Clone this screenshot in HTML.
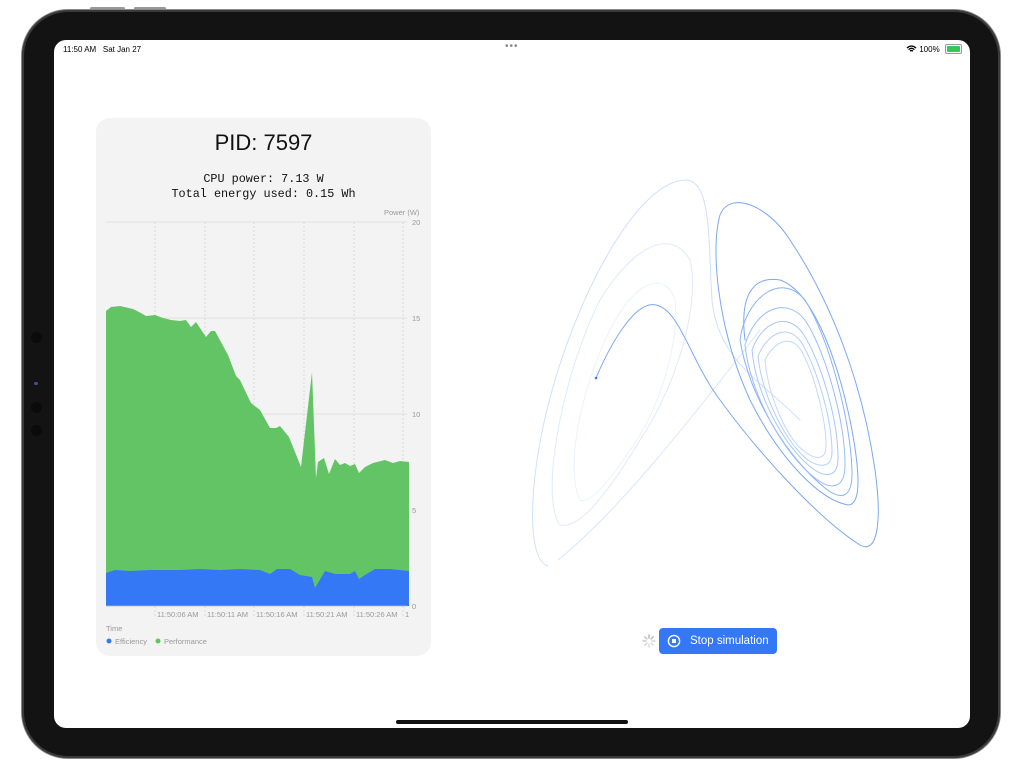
<!DOCTYPE html>
<html><head><style>
html,body{margin:0;padding:0;width:1024px;height:768px;background:#fff;overflow:hidden;font-family:"Liberation Sans",sans-serif}
.frame{position:absolute;left:22px;top:10px;width:978px;height:748px;border-radius:46px;background:#131313;box-shadow:0 0 0 1px #888, inset 0 0 0 2px #3a3a3a}
.screen{position:absolute;left:54px;top:40px;width:916px;height:688px;background:#fff;border-radius:12px;overflow:hidden}
.btnTop{position:absolute;top:7px;height:3px;background:#999;border-radius:2px}
.dot{position:absolute;left:31px;width:11px;height:11px;border-radius:50%;background:#0b0b0b}
.sb{position:absolute;top:5px;font-size:8px;color:#000}
.card{position:absolute;left:42px;top:78px;width:335px;height:538px;background:#f3f3f3;border-radius:14px}
.mono{font-family:"Liberation Mono",monospace}
</style></head><body>
<div class="btnTop" style="left:90px;width:35px"></div>
<div class="btnTop" style="left:134px;width:32px"></div>
<div class="frame"></div>
<div class="dot" style="top:332px"></div>
<div class="dot" style="top:402px"></div>
<div class="dot" style="top:425px"></div>
<div style="position:absolute;left:34px;top:382px;width:4px;height:3px;background:#3a4fa0;border-radius:2px"></div>
<div class="screen">
  <div class="sb" style="left:9px">11:50 AM&nbsp;&nbsp; Sat Jan 27</div>
  <div class="sb" style="left:451px;top:1px;color:#888;font-size:10px;letter-spacing:1px">•••</div>
  <div class="sb" style="left:852px">
    <svg width="11" height="8" viewBox="0 0 11 8" style="vertical-align:-1px"><path d="M1 3Q5.5-1 10 3M2.6 4.6Q5.5 2 8.4 4.6M4 6.1Q5.5 5 7 6.1" stroke="#000" stroke-width="1.3" fill="none"/></svg>
    100%</div>
  <div style="position:absolute;left:891px;top:4px;width:15px;height:8px;border:1px solid #999;border-radius:2px"><div style="margin:1px;height:6px;background:#34c759;border-radius:1px"></div></div>
  <div class="card">
    <div style="position:absolute;left:0;width:335px;top:12px;text-align:center;font-size:22px;color:#111">PID: 7597</div>
    <div class="mono" style="position:absolute;left:0;width:335px;top:54px;text-align:center;font-size:11.8px;line-height:15px;color:#111">CPU power: 7.13 W<br>Total energy used: 0.15 Wh</div>
  </div>
  <svg style="position:absolute;left:0;top:0" width="916" height="688" viewBox="54 40 916 688">
    <g stroke="#ddd" stroke-width="0.7">
      <line x1="106" y1="222" x2="407" y2="222"/><line x1="106" y1="318" x2="407" y2="318"/>
      <line x1="106" y1="414" x2="407" y2="414"/><line x1="106" y1="510" x2="407" y2="510"/>
    </g>
    <g stroke="#ccc" stroke-width="0.7" stroke-dasharray="2 2">
      <line x1="155" y1="222" x2="155" y2="618"/><line x1="205" y1="222" x2="205" y2="618"/>
      <line x1="254" y1="222" x2="254" y2="618"/><line x1="304" y1="222" x2="304" y2="618"/>
      <line x1="354" y1="222" x2="354" y2="618"/><line x1="403" y1="222" x2="403" y2="618"/>
    </g>
    <path fill="#63c466" d="M106 606L106 311 111 307 120 306 133 309 141 313 146 316 155 315 163 318 171 320 180 321 186 320 191 327 196 322 206 337 211 331 215 331 228 355 236 376 240 380 251 403 260 410 270 428 276 428 280 426 289 437 301 467 312 372 316 478 318 462 324 458 329 474 335 459 340 465 345 463 350 466 355 464 359 473 365 467 373 463 385 460 393 463 400 461 409 462 409 606Z"/>
    <path fill="#3478f6" d="M106 606L106 573 115 570 130 571 150 570 180 570 200 569 220 570 240 569 260 570 270 574 277 569 290 569 300 575 312 577 315 588 325 571 335 574 350 574 355 571 359 579 365 575 375 569 390 569 409 571 409 606Z"/>
    <line x1="106" y1="606" x2="407" y2="606" stroke="#bbb" stroke-width="0.7"/>
    <g font-size="7.5" fill="#999" font-family="Liberation Sans">
      <text x="384" y="215">Power (W)</text>
      <text x="412" y="225">20</text><text x="412" y="321">15</text><text x="412" y="417">10</text>
      <text x="412" y="513">5</text><text x="412" y="609">0</text>
      <text x="157" y="617">11:50:06 AM</text><text x="207" y="617">11:50:11 AM</text>
      <text x="256" y="617">11:50:16 AM</text><text x="306" y="617">11:50:21 AM</text>
      <text x="356" y="617">11:50:26 AM</text><text x="405" y="617">1</text>
      <text x="106" y="631">Time</text>
      <circle cx="109" cy="641" r="2.5" fill="#3478f6"/><text x="115" y="644">Efficiency</text>
      <circle cx="158" cy="641" r="2.5" fill="#63c466"/><text x="164" y="644">Performance</text>
    </g>
    <g fill="none" stroke-linecap="round">
      <path stroke="#cfe0fb" stroke-width="1" d="M548 566C525 560 528 470 555 380C585 280 640 182 685 180C712 180 708 240 712 300C718 360 760 380 800 420"/>
      <path stroke="#d8e6fc" stroke-width="1" d="M558 560C620 510 690 420 760 330"/>
      <path stroke="#dfeafd" stroke-width="1" d="M560 525C540 500 560 380 600 300C630 250 670 225 690 260C700 300 680 380 640 440C610 490 580 530 560 525Z"/>
      <path stroke="#ebf2fe" stroke-width="1" d="M580 500C565 470 580 390 610 330C635 280 665 270 675 300C680 340 660 410 630 450C610 480 590 505 580 500Z"/>
      <path stroke="#7aa8f2" stroke-width="1" d="M596 378C610 345 635 300 656 305C680 310 690 360 720 400C760 455 820 520 860 545C878 555 882 520 875 470C862 380 830 300 790 240C768 205 730 190 720 215C710 250 718 330 750 400C780 460 820 500 848 505C862 505 860 470 850 420C835 350 810 290 780 280C750 275 740 300 745 340"/>
      <path stroke="#8ab3f4" stroke-width="1" d="M740 340C745 300 780 270 805 300C830 340 850 420 852 470C853 500 840 500 825 488C790 460 750 400 740 340Z"/>
      <path stroke="#9bbdf5" stroke-width="1" d="M745 345C755 310 785 295 805 320C825 350 845 420 845 465C845 490 830 490 815 478C785 455 750 395 745 345Z"/>
      <path stroke="#a9c7f7" stroke-width="1" d="M752 350C762 322 788 310 804 335C822 365 838 420 838 458C838 478 825 478 812 468C785 448 756 395 752 350Z"/>
      <path stroke="#b5cff8" stroke-width="1" d="M758 356C768 332 790 322 803 345C818 372 832 420 832 452C832 468 820 468 808 460C785 442 762 395 758 356Z"/>
      <path stroke="#c3d8fa" stroke-width="1" d="M765 360C775 340 792 334 802 352C815 376 826 420 826 446C826 460 816 460 805 452C786 438 768 395 765 360Z"/>
      <circle cx="596" cy="378" r="1.3" fill="#3478f6"/>
    </g>
  </svg>
  <svg style="position:absolute;left:588px;top:594px" width="14" height="14" viewBox="-7 -7 14 14"><g stroke="#aaa" stroke-width="1.4" stroke-linecap="round">
    <line x1="0" y1="-3" x2="0" y2="-6" opacity=".9"/><line x1="3" y1="0" x2="6" y2="0" opacity=".5"/><line x1="0" y1="3" x2="0" y2="6" opacity=".4"/><line x1="-3" y1="0" x2="-6" y2="0" opacity=".6"/>
    <line x1="2" y1="-2" x2="4.3" y2="-4.3" opacity=".8"/><line x1="2" y1="2" x2="4.3" y2="4.3" opacity=".4"/><line x1="-2" y1="2" x2="-4.3" y2="4.3" opacity=".5"/><line x1="-2" y1="-2" x2="-4.3" y2="-4.3" opacity=".7"/></g></svg>
  <div style="position:absolute;left:605px;top:588px;width:118px;height:26px;background:#3478f6;border-radius:4px;color:#fff;font-size:11.5px;line-height:26px">
    <svg style="position:absolute;left:8px;top:6px" width="14" height="14" viewBox="0 0 14 14"><circle cx="7" cy="7" r="5.6" stroke="#fff" stroke-width="1.4" fill="none"/><rect x="5" y="5" width="4" height="4" fill="#fff"/></svg>
    <span style="position:absolute;left:31px">Stop simulation</span>
  </div>
  <div style="position:absolute;left:342px;top:680px;width:232px;height:4px;background:#111;border-radius:2px"></div>
</div>
</body></html>
